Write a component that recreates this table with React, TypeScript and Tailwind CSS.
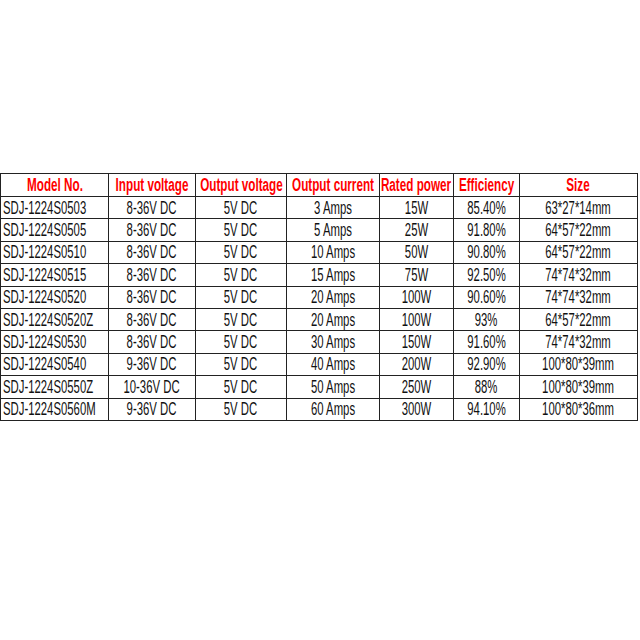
import React from "react";

const headers = [
    "Model No.",
    "Input voltage",
    "Output voltage",
    "Output current",
    "Rated power",
    "Efficiency",
    "Size",
];

const rows: string[][] = [
    ["SDJ-1224S0503", "8-36V DC", "5V DC", "3 Amps", "15W", "85.40%", "63*27*14mm"],
    ["SDJ-1224S0505", "8-36V DC", "5V DC", "5 Amps", "25W", "91.80%", "64*57*22mm"],
    ["SDJ-1224S0510", "8-36V DC", "5V DC", "10 Amps", "50W", "90.80%", "64*57*22mm"],
    ["SDJ-1224S0515", "8-36V DC", "5V DC", "15 Amps", "75W", "92.50%", "74*74*32mm"],
    ["SDJ-1224S0520", "8-36V DC", "5V DC", "20 Amps", "100W", "90.60%", "74*74*32mm"],
    ["SDJ-1224S0520Z", "8-36V DC", "5V DC", "20 Amps", "100W", "93%", "64*57*22mm"],
    ["SDJ-1224S0530", "8-36V DC", "5V DC", "30 Amps", "150W", "91.60%", "74*74*32mm"],
    ["SDJ-1224S0540", "9-36V DC", "5V DC", "40 Amps", "200W", "92.90%", "100*80*39mm"],
    ["SDJ-1224S0550Z", "10-36V DC", "5V DC", "50 Amps", "250W", "88%", "100*80*39mm"],
    ["SDJ-1224S0560M", "9-36V DC", "5V DC", "60 Amps", "300W", "94.10%", "100*80*36mm"],
];

const SpecTable: React.FC = () => {
    return (
        <div className="grid grid-cols-[108px_87px_91px_93px_74px_66px_118px] w-[638px] border-l border-t border-[#222]">
            {headers.map((h) => (
                <div
                    key={h}
                    className="h-[23px] flex items-center justify-center border-r border-b border-[#222] whitespace-nowrap"
                >
                    <span className="inline-block scale-x-[0.65] text-[18px] font-bold text-[#f00] leading-none">
                        {h}
                    </span>
                </div>
            ))}
            {rows.map((row, r) =>
                row.map((cell, c) => (
                    <div
                        key={`${r}-${c}`}
                        className={`h-[22.4px] flex items-center border-r border-b border-[#222] whitespace-nowrap ${
                            c === 0 ? "justify-start pl-[2px]" : "justify-center"
                        }`}
                    >
                        <span
                            className={`inline-block scale-x-[0.63] text-[18px] text-[#111] leading-none ${
                                c === 0 ? "origin-left" : "origin-center"
                            }`}
                        >
                            {cell}
                        </span>
                    </div>
                ))
            )}
        </div>
    );
};

export default function App() {
    return (
        <div
            className="w-[640px] h-[640px] bg-white overflow-hidden pt-[173px]"
            style={{ fontFamily: '"Liberation Sans", Arial, sans-serif' }}
        >
            <SpecTable />
        </div>
    );
}
